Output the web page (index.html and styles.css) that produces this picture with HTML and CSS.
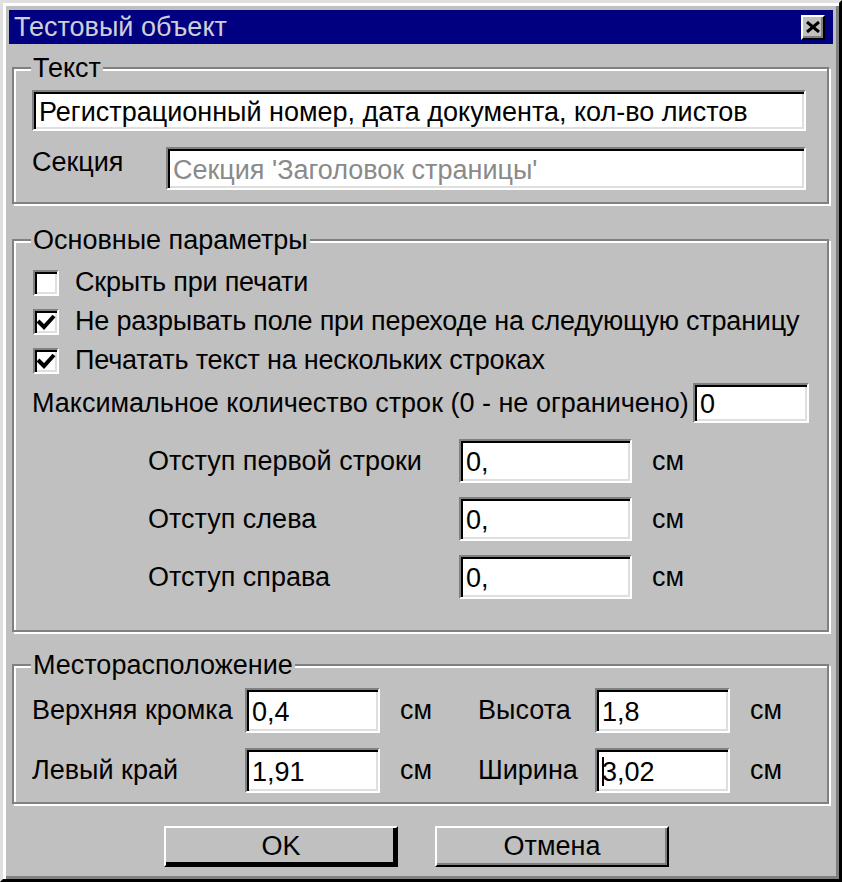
FILE: index.html
```html
<!DOCTYPE html>
<html lang="ru">
<head>
    <meta charset="UTF-8">
    <title>Тестовый объект</title>
    <link rel="stylesheet" href="styles.css">
</head>
<body>

<div class="window">
    <div class="titlebar">
        <span class="title">Тестовый объект</span>
        <button class="close-btn">
            <svg width="14" height="12" viewBox="0 0 14 12"><path d="M1 1 L13 11 M13 1 L1 11" stroke="#000" stroke-width="3"/></svg>
        </button>
    </div>

    <div class="content">
        <fieldset class="group group-text">
            <legend>Текст</legend>
            <input type="text" class="field field-wide" value="Регистрационный номер, дата документа, кол-во листов">
            <div class="row-section">
                <label class="lbl-section">Секция</label>
                <input type="text" class="field field-section" value="Секция 'Заголовок страницы'" readonly>
            </div>
        </fieldset>

        <fieldset class="group group-params">
            <legend>Основные параметры</legend>
            <div class="check-row">
                <span class="checkbox"></span>
                <span>Скрыть при печати</span>
            </div>
            <div class="check-row">
                <span class="checkbox">
                    <svg width="20" height="18" viewBox="0 0 20 18"><path d="M2 8 L8 14 L18 3" fill="none" stroke="#000" stroke-width="4"/></svg>
                </span>
                <span>Не разрывать поле при переходе на следующую страницу</span>
            </div>
            <div class="check-row">
                <span class="checkbox">
                    <svg width="20" height="18" viewBox="0 0 20 18"><path d="M2 8 L8 14 L18 3" fill="none" stroke="#000" stroke-width="4"/></svg>
                </span>
                <span>Печатать текст на нескольких строках</span>
            </div>
            <div class="max-row">
                <span>Максимальное количество строк (0 - не ограничено)</span>
                <input type="text" class="field field-max" value="0">
            </div>
            <div class="indent-row">
                <span class="indent-label">Отступ первой строки</span>
                <input type="text" class="field field-indent" value="0,">
                <span class="unit">см</span>
            </div>
            <div class="indent-row">
                <span class="indent-label">Отступ слева</span>
                <input type="text" class="field field-indent" value="0,">
                <span class="unit">см</span>
            </div>
            <div class="indent-row">
                <span class="indent-label">Отступ справа</span>
                <input type="text" class="field field-indent" value="0,">
                <span class="unit">см</span>
            </div>
        </fieldset>

        <fieldset class="group group-place">
            <legend>Месторасположение</legend>
            <div class="place-grid">
                <span>Верхняя кромка</span>
                <input type="text" class="field field-place" value="0,4">
                <span class="unit">см</span>
                <span>Высота</span>
                <input type="text" class="field field-place" value="1,8">
                <span class="unit">см</span>

                <span>Левый край</span>
                <input type="text" class="field field-place" value="1,91">
                <span class="unit">см</span>
                <span>Ширина</span>
                <span class="focus-wrap"><input type="text" class="field field-place" value="3,02"></span>
                <span class="unit">см</span>
            </div>
        </fieldset>

        <div class="buttons">
            <button class="btn btn-default">OK</button>
            <button class="btn">Отмена</button>
        </div>
    </div>
</div>

</body>
</html>
```

FILE: styles.css
```css
body { margin: 0; background: #c0c0c0; font-family: "Liberation Sans", Arial, sans-serif; font-size: 27px; color: #000; }

.window { width: 842px; height: 882px; box-sizing: border-box; background: #c0c0c0; border: 3px solid; border-color: #dfdfdf #000 #000 #dfdfdf; box-shadow: inset 3px 3px 0 #fff, inset -3px -3px 0 #808080; padding: 7px 6px 0 6px; }

.titlebar { height: 34px; background: #000080; display: flex; align-items: center; justify-content: space-between; padding: 0 8px 0 5px; }
.title { color: #cfcfd6; font-size: 27px; }
.close-btn { width: 24px; height: 25px; padding: 0; background: #c0c0c0; border: 2px solid; border-color: #fff #000 #000 #fff; box-shadow: inset -2px -2px 0 #808080; display: flex; align-items: center; justify-content: center; }

.content { padding: 10px 4px 0 3px; }

.group { margin: 0; border: 2px solid #808080; box-shadow: inset 2px 2px 0 #fff, 2px 2px 0 #fff; padding: 8px 18px 12px 18px; }
.group legend { padding: 0 2px; margin-left: -1px; line-height: 28px; background: #c0c0c0; }
.group-params { margin-top: 22px; padding-top: 9px; padding-bottom: 31px; }
.group-place { margin-top: 19px; padding-top: 9px; padding-bottom: 9px; }

.field { font: inherit; color: #000; background: #fff; box-sizing: border-box; margin: 0; padding: 3px 5px 0 5px; border: 2px solid; border-color: #808080 #fff #fff #808080; box-shadow: inset 2px 2px 0 #000, inset -2px -2px 0 #dfdfdf; outline: none; }
.field-wide { width: 774px; height: 41px; display: block; }
.row-section { display: flex; align-items: center; margin-top: 16px; }
.lbl-section { width: 134px; position: relative; top: -6px; }
.field-section { width: 640px; height: 43px; color: #8a8a8a; }

.check-row { display: flex; align-items: center; height: 39px; white-space: nowrap; letter-spacing: -0.2px; }
.checkbox { flex: none; width: 26px; height: 26px; box-sizing: border-box; background: #fff; border: 2px solid; border-color: #808080 #fff #fff #808080; box-shadow: inset 2px 2px 0 #000, inset -2px -2px 0 #dfdfdf; margin: 0 16px 0 1px; display: flex; align-items: center; justify-content: center; }

.max-row { display: flex; align-items: center; justify-content: space-between; margin-top: 3px; }
.field-max { width: 116px; height: 40px; }

.indent-row { display: flex; align-items: center; margin-top: 14px; }
.max-row + .indent-row { margin-top: 16px; }
.indent-label { width: 311px; padding-left: 116px; }
.field-indent { width: 173px; height: 44px; }
.unit { padding-left: 20px; }

.place-grid { display: grid; grid-template-columns: 213px 135px 98px 117px 135px auto; row-gap: 15px; align-items: center; }
.field-place { width: 135px; height: 45px; }
.focus-wrap { position: relative; display: block; }
.focus-wrap::after { content: ""; position: absolute; left: 7px; top: 9px; width: 2px; height: 29px; background: #000; }

.buttons { display: flex; justify-content: center; gap: 37px; margin-top: 22px; padding-right: 8px; }
.btn { font: inherit; width: 234px; height: 41px; background: #c0c0c0; border: 2px solid; border-color: #fff #000 #000 #fff; box-shadow: inset -2px -2px 0 #808080; padding: 0; }
.btn-default { box-shadow: inset -3px -3px 0 #000; }
```
